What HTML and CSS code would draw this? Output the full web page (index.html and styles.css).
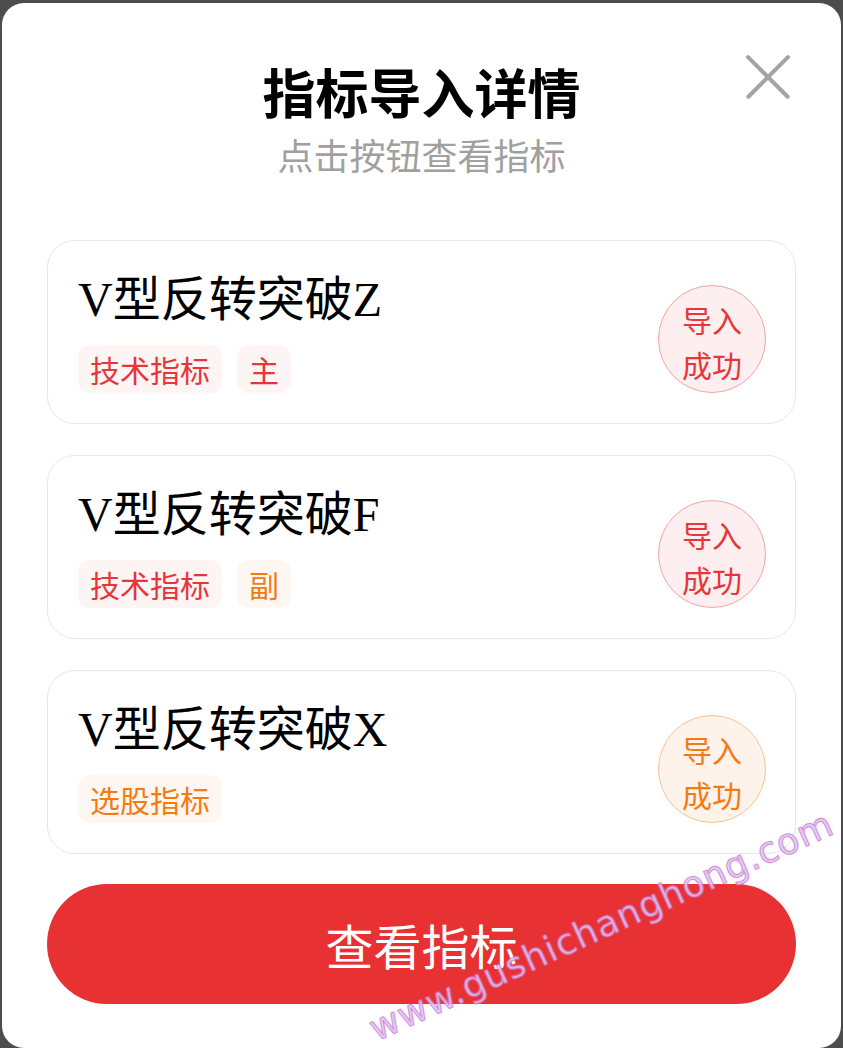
FILE: index.html
```html
<!DOCTYPE html>
<html lang="zh-CN">
<head>
    <meta charset="UTF-8">
    <meta name="viewport" content="width=device-width, initial-scale=1.0">
    <title>指标导入详情</title>
    <link rel="stylesheet" href="styles.css">
</head>
<body>
    <!-- 弹窗 -->
    <div class="dialog">
        <div class="close"></div>

        <div class="head">
            <h2 class="title">指标导入详情</h2>
            <p class="sub">点击按钮查看指标</p>
        </div>

        <!-- 指标列表 -->
        <div class="list">
            <div class="card">
                <div class="info">
                    <div class="name">V型反转突破Z</div>
                    <div class="tags">
                        <span class="tag red">技术指标</span>
                        <span class="tag red">主</span>
                    </div>
                </div>
                <div class="state red">导入<br>成功</div>
            </div>
            <div class="card">
                <div class="info">
                    <div class="name">V型反转突破F</div>
                    <div class="tags">
                        <span class="tag red">技术指标</span>
                        <span class="tag orange">副</span>
                    </div>
                </div>
                <div class="state red">导入<br>成功</div>
            </div>
            <div class="card">
                <div class="info">
                    <div class="name">V型反转突破X</div>
                    <div class="tags">
                        <span class="tag orange">选股指标</span>
                    </div>
                </div>
                <div class="state orange">导入<br>成功</div>
            </div>
        </div>

        <div class="btn">查看指标</div>
    </div>

    <!-- 水印 -->
    <div class="mark">www.gushichanghong.com</div>
</body>
</html>
```

FILE: styles.css
```css
*{
    margin: 0;
    padding: 0;
    box-sizing: border-box;
}
body{
    position: relative;
    width: 843px;
    height: 1048px;
    overflow: hidden;
    background: #4d4d4d;
    font-family: "Noto Sans CJK SC", "Noto Sans", sans-serif;
}
.dialog{
    position: relative;
    width: 839px;
    height: 1045px;
    margin: 3px 2px 0 2px;
    background: #fff;
    border-radius: 22px;
    padding-top: 57px;
    overflow: hidden;
}
/* 关闭按钮 */
.close{
    position: absolute;
    top: 52px;
    right: 51px;
    width: 44px;
    height: 44px;
}
.close::before,
.close::after{
    content: "";
    position: absolute;
    left: -8px;
    top: 20px;
    width: 60px;
    height: 3.5px;
    border-radius: 2px;
    background: #a3a3a3;
    transform: rotate(45deg);
}
.close::after{
    transform: rotate(-45deg);
}
.head{
    text-align: center;
}
.title{
    font-size: 53px;
    line-height: 62px;
    font-weight: bold;
    color: #000;
}
.sub{
    margin-top: 11px;
    font-size: 36px;
    line-height: 43px;
    color: #a0a0a0;
}
.list{
    margin: 64px 45px 0;
    display: flex;
    flex-direction: column;
    gap: 31px;
}
.card{
    display: flex;
    align-items: flex-end;
    justify-content: space-between;
    height: 184px;
    border: 1px solid #e6e6e6;
    border-radius: 28px;
    padding: 30px 29px 30px 30px;
}
.name{
    font-family: "Liberation Serif", "Noto Sans CJK SC", serif;
    font-size: 48px;
    line-height: 58px;
    color: #000;
}
.tags{
    display: flex;
    gap: 15px;
    margin-top: 16px;
}
.tag{
    height: 48px;
    line-height: 48px;
    padding: 0 12px;
    font-size: 30px;
    border-radius: 12px;
}
.tag.red{
    color: #e8353a;
    background: #fdf4f4;
}
.tag.orange{
    color: #f57a12;
    background: #fef7f1;
}
.state{
    width: 108px;
    height: 108px;
    border-radius: 50%;
    border: 1px solid;
    display: flex;
    align-items: center;
    justify-content: center;
    padding-top: 5px;
    text-align: center;
    font-size: 30px;
    line-height: 45px;
}
.state.red{
    color: #e8353a;
    background: #fdeeef;
    border-color: #f3a3a5;
}
.state.orange{
    color: #f57a12;
    background: #fef3ea;
    border-color: #fbc190;
}
.btn{
    margin: 30px 45px 0;
    height: 120px;
    line-height: 120px;
    border-radius: 60px;
    background: #e83132;
    color: #fff;
    font-size: 48px;
    text-align: center;
}
.mark{
    position: absolute;
    left: 379px;
    top: 1011px;
    font-family: "DejaVu Sans", sans-serif;
    font-size: 36px;
    line-height: 36px;
    letter-spacing: 1px;
    white-space: nowrap;
    color: rgba(255, 255, 255, 0.4);
    -webkit-text-stroke: 1px rgba(228, 95, 180, 0.7);
    text-shadow: 0 0 1.5px rgba(170, 160, 255, 0.85);
    transform: rotate(-24.4deg);
    transform-origin: 0 100%;
    pointer-events: none;
}
```
